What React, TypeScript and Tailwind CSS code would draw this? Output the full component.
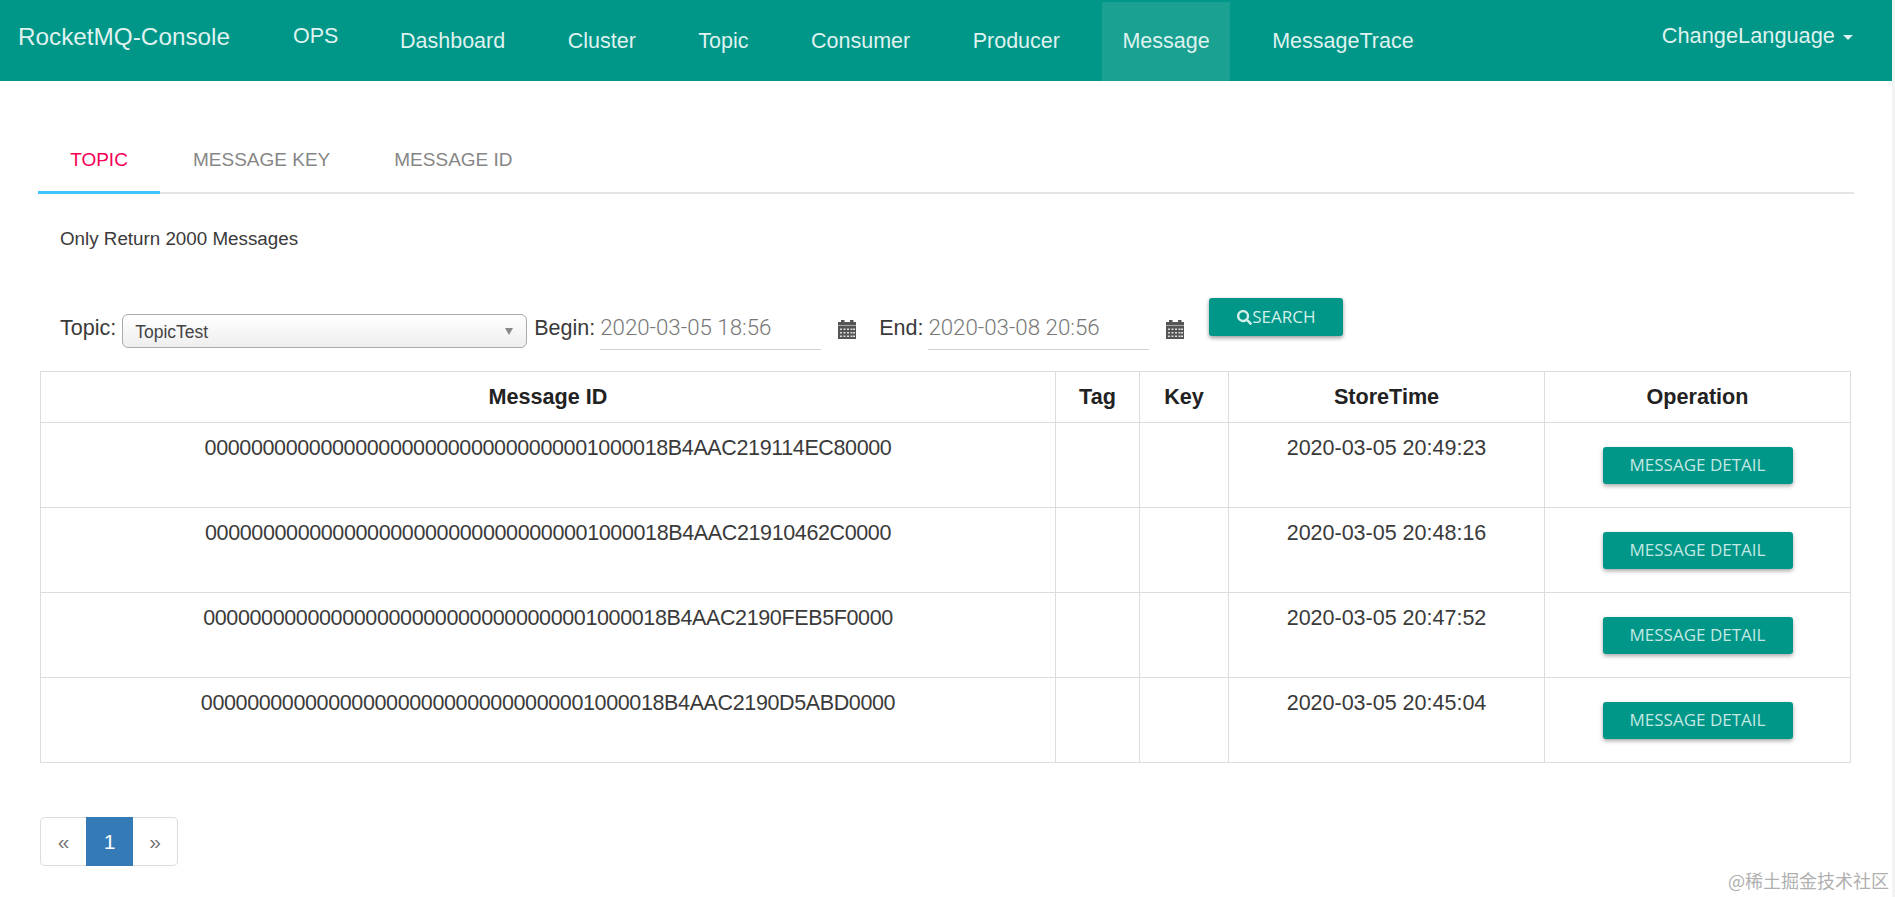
import React from 'react';
import { FaSearch } from 'react-icons/fa';

const navItems = ['Dashboard', 'Cluster', 'Topic', 'Consumer', 'Producer', 'Message', 'MessageTrace'];

const rows = [
  { id: '0000000000000000000000000000000001000018B4AAC219114EC80000', time: '2020-03-05 20:49:23' },
  { id: '0000000000000000000000000000000001000018B4AAC21910462C0000', time: '2020-03-05 20:48:16' },
  { id: '0000000000000000000000000000000001000018B4AAC2190FEB5F0000', time: '2020-03-05 20:47:52' },
  { id: '0000000000000000000000000000000001000018B4AAC2190D5ABD0000', time: '2020-03-05 20:45:04' },
];

// glyphicon style calendar: solid body, two pegs, grid of light dots
const CalendarIcon: React.FC = () => (
  <svg width="18" height="19" viewBox="0 0 18 19" className="ml-[17px] mt-[23px] shrink-0">
    <rect x="3" y="0" width="3.5" height="3" fill="#555" />
    <rect x="12" y="0" width="3.5" height="3" fill="#555" />
    <rect x="0" y="2" width="18" height="3.5" fill="#555" />
    <rect x="0" y="6" width="18" height="13" fill="#555" />
    {[8.5, 12, 15.5].map((y) =>
      [2, 5.5, 9, 12.5, 15].map((x) => (
        <rect key={`${x}-${y}`} x={x} y={y} width="2" height="1.5" fill="#ddd" />
      )),
    )}
  </svg>
);

const DateField: React.FC<{ label: string; value: string }> = ({ label, value }) => (
  <div className="flex items-start">
    <span className="mt-[16px] text-[21.5px] leading-[30px] text-[#3a3a3a]">{label}</span>
    <div className="ml-[5px] mt-[14px] h-[39px] w-[221px] border-b border-[#d2d2d2] pt-[1px] text-[22.3px] font-light leading-[30px] text-[#777] font-['Roboto',sans-serif]">
      {value}
    </div>
    <CalendarIcon />
  </div>
);

const App: React.FC = () => {
  return (
    <div className="relative flex h-[897px] w-full overflow-hidden bg-white font-['Liberation_Sans',sans-serif]">
      <div className="min-w-0 flex-1">
        {/* Navbar */}
        <nav className="flex h-[81px] items-stretch bg-[#009688] text-[21.5px] text-[#dff2ef]">
          <div className="ml-[18px] mt-[22px] w-[275px] text-[24.3px] leading-[30px]">RocketMQ-Console</div>
          <div className="mt-[21px] w-[87px] leading-[30px]">OPS</div>
          <ul className="mt-[2px] flex gap-[22.5px]">
            {navItems.map((item) => (
              <li
                key={item}
                className={`px-5 pt-[24px] leading-[30px] ${item === 'Message' ? 'bg-[#1aa192]' : ''}`}
              >
                {item}
              </li>
            ))}
          </ul>
          <div className="ml-auto mr-[39px] mt-[21px] flex h-[30px] items-center text-[21.8px] leading-[30px]">
            ChangeLanguage
            <span className="ml-[8px] mt-[2px] h-0 w-0 border-x-[5px] border-t-[5px] border-x-transparent border-t-[#dff2ef]" />
          </div>
        </nav>

        <main className="px-[38px]">
          {/* Tabs */}
          <div className="mt-[48px] flex h-[65px] border-b-2 border-[#e4e4e4] text-[19px] text-[#868686]">
            <div className="-mb-[2px] w-[122px] border-b-[3px] border-[#40c4ff] pt-[17px] text-center text-[#f50057]">TOPIC</div>
            <div className="ml-[33px] pt-[17px]">MESSAGE KEY</div>
            <div className="ml-[64px] pt-[17px]">MESSAGE ID</div>
          </div>

          <p className="ml-[22px] mt-[31px] text-[18.8px] leading-[27px] text-[#3a3a3a]">Only Return 2000 Messages</p>

          {/* Search form */}
          <div className="ml-[22px] mt-[45px] flex h-[74px] items-start">
            <span className="mt-[16px] text-[21.5px] leading-[30px] text-[#3a3a3a]">Topic:</span>
            <div className="ml-[6px] mt-[17px] flex h-[34px] w-[405px] items-center justify-between rounded-[6px] border border-[#aaa] bg-gradient-to-b from-white to-[#eee] pl-[12px] pr-[13px] text-[17.5px] text-[#444]">
              <span className="mt-[3px]">TopicTest</span>
              <span className="h-0 w-0 border-x-[4px] border-t-[7px] border-x-transparent border-t-[#888]" />
            </div>
            <div className="ml-[7px]">
              <DateField label="Begin:" value="2020-03-05 18:56" />
            </div>
            <div className="ml-[23px]">
              <DateField label="End:" value="2020-03-08 20:56" />
            </div>
            <button className="ml-[25px] mt-[1px] flex h-[38px] w-[134px] items-center justify-center rounded-[3px] bg-[#009688] text-[17px] text-[#d5efeb] shadow-[0_2px_4px_rgba(0,0,0,0.4)] font-['Open_Sans',sans-serif]">
              <FaSearch size={15} />
              SEARCH
            </button>
          </div>

          {/* Results */}
          <table className="ml-[2px] w-[1810px] table-fixed border-collapse text-[21.5px] text-[#3a3a3a]">
            <colgroup>
              <col className="w-[1015px]" />
              <col className="w-[84px]" />
              <col className="w-[89px]" />
              <col className="w-[316px]" />
              <col className="w-[306px]" />
            </colgroup>
            <thead>
              <tr className="h-[51px] text-[21.6px] text-[#222]">
                {['Message ID', 'Tag', 'Key', 'StoreTime', 'Operation'].map((h) => (
                  <th key={h} className="border border-[#ddd] font-bold">{h}</th>
                ))}
              </tr>
            </thead>
            <tbody>
              {rows.map((row) => (
                <tr key={row.id} className="h-[85px]">
                  <td className="border border-[#ddd] pt-[10px] text-center align-top leading-[30px] tracking-[-0.375px]">{row.id}</td>
                  <td className="border border-[#ddd]" />
                  <td className="border border-[#ddd]" />
                  <td className="border border-[#ddd] pt-[10px] text-center align-top leading-[30px]">{row.time}</td>
                  <td className="border border-[#ddd] pt-[24px] align-top">
                    <button className="mx-auto block h-[37px] w-[190px] rounded-[3px] bg-[#009688] pb-[2px] text-[17px] text-[#c4e8e3] shadow-[0_2px_4px_rgba(0,0,0,0.35)] font-['Open_Sans',sans-serif]">
                      MESSAGE DETAIL
                    </button>
                  </td>
                </tr>
              ))}
            </tbody>
          </table>

          {/* Pagination */}
          <div className="ml-[2px] mt-[54px] flex h-[49px] w-[138px] items-stretch text-[21px]">
            <div className="flex w-[46px] items-center justify-center rounded-l-[5px] border border-r-0 border-[#ddd] text-[#777]">«</div>
            <div className="flex w-[47px] items-center justify-center bg-[#337ab7] text-white">1</div>
            <div className="flex w-[45px] items-center justify-center rounded-r-[5px] border border-l-0 border-[#ddd] text-[#777]">»</div>
          </div>
        </main>
      </div>

      {/* Scrollbar track */}
      <div className="w-[3px] shrink-0 bg-[#f3f3f3]" />

      {/* Watermark */}
      <span className="absolute bottom-[6px] right-[6px] text-[18px] leading-[22px] text-[#b0b0b0] font-['Noto_Sans_CJK_SC',sans-serif]">@稀土掘金技术社区</span>
    </div>
  );
};

export default App;
